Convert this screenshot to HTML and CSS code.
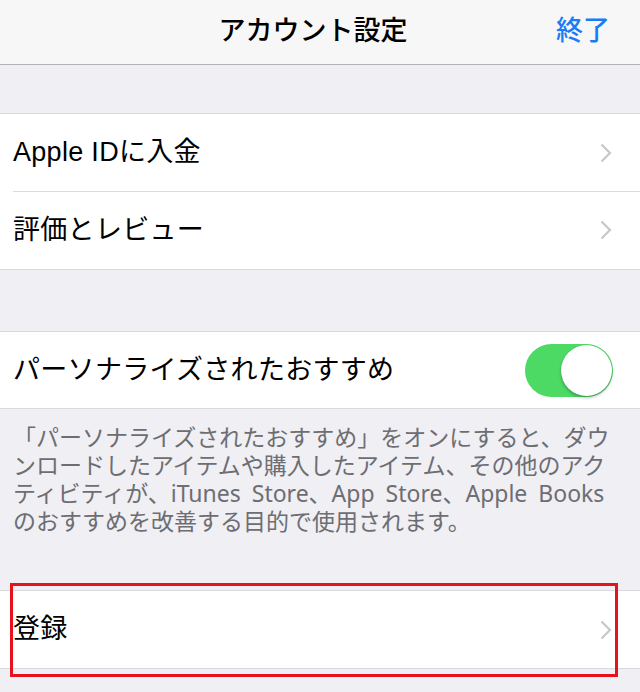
FILE: index.html
```html
<!DOCTYPE html>
<html lang="ja">
<head>
<meta charset="utf-8">
<title>アカウント設定</title>
<link rel="stylesheet" href="styles.css">
</head>
<body>
<div class="screen">
  <header class="navbar">
    <div class="nav-side"></div>
    <h1 class="nav-title">アカウント設定</h1>
    <div class="nav-side nav-right"><span class="nav-done">終了</span></div>
  </header>

  <section class="group group-first">
    <div class="cell">
      <span class="cell-label">Apple IDに入金</span>
      <svg class="chevron" viewBox="0 0 12 20"><polyline points="1.5,1.5 10,10 1.5,18.5"/></svg>
    </div>
    <div class="cell">
      <span class="cell-label">評価とレビュー</span>
      <svg class="chevron" viewBox="0 0 12 20"><polyline points="1.5,1.5 10,10 1.5,18.5"/></svg>
    </div>
  </section>

  <section class="group group-second">
    <div class="cell cell-switch">
      <span class="cell-label">パーソナライズされたおすすめ</span>
      <span class="switch"><span class="switch-knob"></span></span>
    </div>
  </section>
  <p class="group-footer">「パーソナライズされたおすすめ」をオンにすると、ダウンロードしたアイテムや購入したアイテム、その他のアクティビティが、iTunes Store、App Store、Apple Booksのおすすめを改善する目的で使用されます。</p>

  <section class="group group-third">
    <div class="cell">
      <span class="cell-label">登録</span>
      <svg class="chevron" viewBox="0 0 12 20"><polyline points="1.5,1.5 10,10 1.5,18.5"/></svg>
    </div>
    <div class="highlight"></div>
  </section>
</div>
</body>
</html>
```

FILE: styles.css
```css
* { box-sizing: border-box; }

html, body {
  margin: 0;
  padding: 0;
  background: #efeff4;
}

body {
  font-family: "Liberation Sans", "Noto Sans CJK JP", sans-serif;
  color: #000;
}

.screen {
  width: 640px;
  min-height: 692px;
  background: #efeff4;
  position: relative;
  overflow: hidden;
}

/* top navigation bar */
.navbar {
  height: 65px;
  background: #f7f7f8;
  border-bottom: 1px solid #b4b4b8;
  display: flex;
  align-items: center;
  justify-content: space-between;
  padding: 0 30px 8px 30px;
}

.nav-side {
  width: 120px;
}

.nav-right {
  display: flex;
  justify-content: flex-end;
}

.nav-title {
  margin: 0;
  font-size: 27px;
  font-weight: 500;
  letter-spacing: 0;
  font-family: "Noto Sans CJK JP", sans-serif;
  line-height: 1;
  padding-right: 14px;
}

.nav-done {
  font-family: "Noto Sans CJK JP", sans-serif;
  font-size: 27px;
  font-weight: 500;
  color: #1a7cf5;
  line-height: 1;
}

/* grouped table sections */
.group {
  background: #fff;
  border-top: 1px solid #d9d9de;
  border-bottom: 1px solid #d9d9de;
  position: relative;
}

.group-first { margin-top: 48px; }
.group-second { margin-top: 61px; }
.group-third { margin-top: 0; }

.cell {
  height: 77px;
  display: flex;
  align-items: center;
  justify-content: space-between;
  padding: 0 28px 0 13px;
  position: relative;
}

.cell + .cell {
  height: 78px;
}

.cell + .cell::before {
  content: "";
  position: absolute;
  top: 0;
  left: 13px;
  right: 0;
  height: 1px;
  background: #dcdce0;
}

.cell-switch {
  height: 76px;
  padding-right: 27px;
}

.cell-label {
  font-size: 27px;
  line-height: 1;
  letter-spacing: 0.3px;
}

.chevron {
  width: 12px;
  height: 20px;
  fill: none;
  stroke: #c7c7cc;
  stroke-width: 2.2;
}

/* on/off switch, shown in the on state */
.switch {
  width: 88px;
  height: 53px;
  border-radius: 27px;
  background: #4cd964;
  position: relative;
  display: block;
}

.switch-knob {
  position: absolute;
  top: 1px;
  right: 1px;
  width: 51px;
  height: 51px;
  border-radius: 50%;
  background: #fff;
  box-shadow: 0 2px 3px rgba(0, 0, 0, 0.25), 0 0 1px rgba(0, 0, 0, 0.2);
}

.group-footer {
  margin: 0;
  padding: 14px 27px 55px 13px;
  width: 640px;
  font-family: "Noto Sans", "Noto Sans CJK JP", sans-serif;
  font-size: 23px;
  line-height: 28px;
  word-spacing: 5px;
  color: #6d6d72;
}

/* red annotation frame around the 登録 row */
.highlight {
  position: absolute;
  left: 10px;
  top: -8px;
  width: 608px;
  height: 94px;
  border: 3px solid #e8121c;
  pointer-events: none;
}
```
